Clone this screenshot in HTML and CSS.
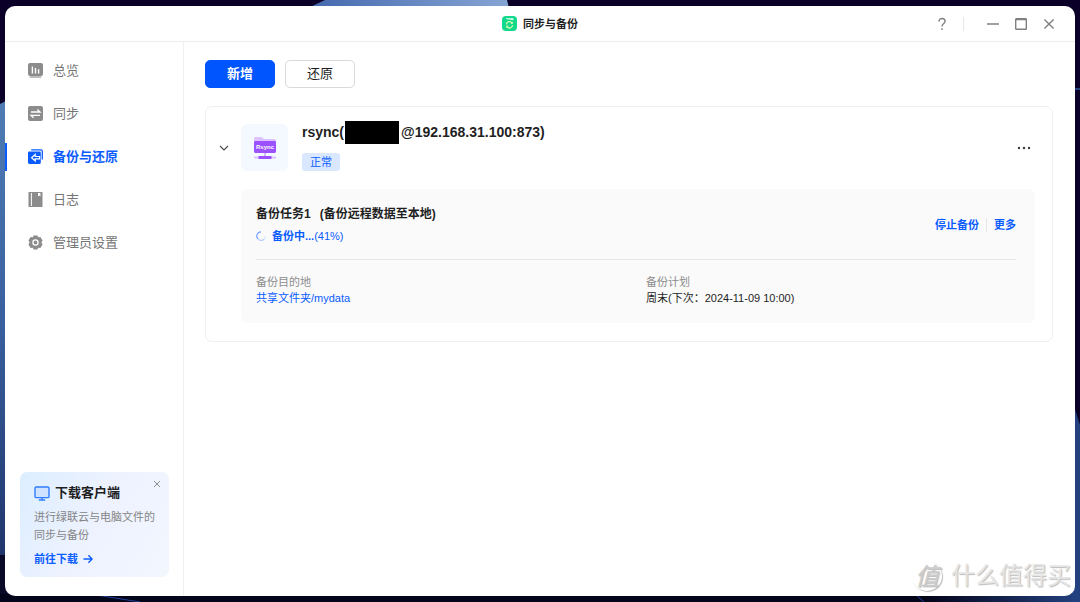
FILE: index.html
```html
<!DOCTYPE html>
<html lang="zh-CN">
<head>
<meta charset="utf-8">
<meta name="viewport" content="width=device-width, initial-scale=1">
<title>同步与备份</title>
<link rel="stylesheet" href="styles.css">
</head>
<body>
<svg class="wallpaper" viewBox="0 0 1080 602" preserveAspectRatio="none" aria-hidden="true">
  <defs>
    <linearGradient id="wl" x1="0" y1="0" x2="0" y2="1"><stop offset="0" stop-color="#4f7cb5"/><stop offset=".5" stop-color="#385f9e"/><stop offset="1" stop-color="#20356c"/></linearGradient>
    <linearGradient id="wr" x1="0" y1="0" x2="1" y2="0"><stop offset="0" stop-color="#04051c"/><stop offset="1" stop-color="#24417f"/></linearGradient>
    <linearGradient id="wt" x1="0" y1="0" x2="1" y2="0"><stop offset="0" stop-color="#4468ae"/><stop offset="1" stop-color="#86a5d4"/></linearGradient>
  </defs>
  <rect width="1080" height="602" fill="#0a0028"/>
  <path d="M0 104L8 100V555H0Z" fill="url(#wl)"/>
  <path d="M0 555H8V602H0Z" fill="#080a28"/>
  <path d="M325 0H507L509 8H308Z" fill="url(#wt)"/>
  <rect y="594" width="1080" height="8" fill="#03051a"/>
  <path d="M90 594L140 602M915 594L924 602" stroke="#22409a"/>
  <path d="M930 594H1080V602H930Z" fill="url(#wr)"/>
  <path d="M1072 400L1080 425V602H1072Z" fill="#24417f"/>
  <path d="M1072 88H1080V90H1072Z" fill="#24417f"/>
</svg>

<div class="window">
  <header class="titlebar">
    <h1 class="app-title">
      <svg class="app-icon" viewBox="0 0 15 15" aria-hidden="true">
        <rect width="15" height="15" rx="4" fill="#12d98c"/>
        <path d="M4 2.2H11.4V4.2L4 3Z" fill="#e6fff2"/>
        <path d="M4.4 8.4A3.1 3.1 0 0 1 10 6.9M10.6 9.2A3.1 3.1 0 0 1 5 10.7" fill="none" stroke="#d9f7a8" stroke-width="1.3"/>
        <path d="M10.8 5.4V8H8.4ZM4.2 12.2V9.6H6.6Z" fill="#d9f7a8"/>
      </svg>
      同步与备份
    </h1>
    <div class="controls">
      <button class="control" type="button" aria-label="帮助"><svg viewBox="0 0 14 14"><path d="M3.9 4.4C3.9 .5 10.1 .5 10.1 4.4C10.1 6.5 7 6.7 7 9.6M7 11.3V12.9"/></svg></button>
      <span class="control-divider"></span>
      <button class="control" type="button" aria-label="最小化"><svg viewBox="0 0 14 14"><path d="M1 7H13"/></svg></button>
      <button class="control" type="button" aria-label="最大化"><svg viewBox="0 0 14 14"><rect x="1.7" y="1.7" width="10.6" height="10.6" rx=".6"/><path d="M1.7 2.6H12.3"/></svg></button>
      <button class="control" type="button" aria-label="关闭"><svg viewBox="0 0 14 14"><path d="M2.4 2.4L11.6 11.6M11.6 2.4L2.4 11.6"/></svg></button>
    </div>
  </header>

  <div class="body">
    <aside class="sidebar">
      <nav class="nav">
        <a class="nav-item" href="#overview">
          <svg class="nav-icon" viewBox="0 0 15 15"><rect width="15" height="13" rx="2" fill="#8c8c8c"/><rect x="1.5" y="13" width="12" height="2" rx="1" fill="#bdbdbd"/><path d="M4.4 3.4V10.6M7.5 5V10.6M10.6 6.2V10.6" stroke="#fff" stroke-width="1.4"/></svg>
          总览
        </a>
        <a class="nav-item" href="#sync">
          <svg class="nav-icon" viewBox="0 0 15 15"><rect width="15" height="15" rx="2" fill="#8c8c8c"/><path d="M3 6H12L9.4 3.6M12 9.3H3L5.6 11.7" fill="none" stroke="#fff" stroke-width="1.3"/></svg>
          同步
        </a>
        <a class="nav-item nav-item-active" href="#backup" aria-current="page">
          <svg class="nav-icon" viewBox="0 0 15 15"><path d="M3.2 .9H13Q14.3 .9 14.3 2.2V10.5" fill="none" stroke="#0a5cff" stroke-width="1.3"/><rect x="0" y="2.6" width="12.8" height="12.4" rx="1.4" fill="#0a5cff"/><path d="M7.2 5.4L3.6 8.7L7.2 12V9.9H11.6V7.5H7.2Z" fill="none" stroke="#fff" stroke-width="1.2"/></svg>
          备份与还原
        </a>
        <a class="nav-item" href="#log">
          <svg class="nav-icon" viewBox="0 0 15 15"><rect x=".5" width="14" height="15" rx=".6" fill="#8c8c8c"/><path d="M3.4 1V14" stroke="#fff" stroke-width="1"/><path d="M10 1H12.4V4.4L11.2 3.5L10 4.4Z" fill="#fff"/></svg>
          日志
        </a>
        <a class="nav-item" href="#admin">
          <svg class="nav-icon" viewBox="0 0 15 15"><path d="M5.6 .4H9.4L10.2 2.3L12.4 2L14.6 5.4L13.4 7.5L14.6 9.6L12.4 13L10.2 12.7L9.4 14.6H5.6L4.8 12.7L2.6 13L.4 9.6L1.6 7.5L.4 5.4L2.6 2L4.8 2.3Z" fill="#8c8c8c"/><circle cx="7.5" cy="7.5" r="2.6" fill="#8c8c8c" stroke="#fff" stroke-width="1.3"/></svg>
          管理员设置
        </a>
      </nav>

      <section class="promo">
        <button class="promo-close" type="button" aria-label="关闭提示"><svg viewBox="0 0 8 8"><path d="M1 1L7 7M7 1L1 7"/></svg></button>
        <h2 class="promo-title">
          <svg class="promo-icon" viewBox="0 0 16 15" aria-hidden="true"><rect x="1" y="1" width="14" height="10.6" rx="1.2" fill="#cfe2ff" stroke="#2f7dff" stroke-width="1.4"/><path d="M8 12V14M4.8 14H11.2" stroke="#2f7dff" stroke-width="1.4"/></svg>
          下载客户端
        </h2>
        <p class="promo-text">进行绿联云与电脑文件的同步与备份</p>
        <a class="promo-link" href="#download">前往下载 <svg class="arrow" viewBox="0 0 10 10" aria-hidden="true"><path d="M.5 5H9M5.4 1.3L9.1 5L5.4 8.7"/></svg></a>
      </section>
    </aside>

    <main class="main">
      <div class="toolbar">
        <button class="button button-primary" type="button">新增</button>
        <button class="button" type="button">还原</button>
      </div>

      <section class="card">
        <div class="card-head">
          <button class="chevron" type="button" aria-label="收起" aria-expanded="true"><svg viewBox="0 0 10 10"><path d="M1 3L5 7L9 3"/></svg></button>
          <div class="service">
            <svg class="service-icon" viewBox="0 0 24 24" aria-hidden="true">
              <path d="M1 5V2.6Q1 1 2.6 1H8.6L11 3H21.4Q23 3 23 4.6V7H1Z" fill="#dcc3ff"/>
              <rect x="1" y="5" width="22" height="12" rx="1.4" fill="#9b51ff"/>
              <path d="M12 17V20" stroke="#c79cff" stroke-width="1.4"/>
              <path d="M1 21.4H23" stroke="#dcc3ff" stroke-width="2"/>
              <path d="M5.5 21.4H18.5" stroke="#9b51ff" stroke-width="3"/>
              <text x="12" y="13" text-anchor="middle" class="service-label">Rsync</text>
            </svg>
          </div>
          <div class="card-info">
            <h2 class="card-title">rsync(<span class="redacted"></span>@192.168.31.100:873)</h2>
            <span class="tag">正常</span>
          </div>
          <button class="more" type="button" aria-label="更多操作"><svg viewBox="0 0 14 4"><circle cx="2" cy="2" r="1.2"/><circle cx="7" cy="2" r="1.2"/><circle cx="12" cy="2" r="1.2"/></svg></button>
        </div>

        <article class="task">
          <div class="task-head">
            <div>
              <h3 class="task-title"><span>备份任务1</span><span>(备份远程数据至本地)</span></h3>
              <p class="status">
                <svg class="spinner" viewBox="0 0 10 10" aria-hidden="true"><path d="M8.4 8A4.2 4.2 0 0 0 9.2 5" stroke="#dce8ff"/><path d="M5 .8A4.2 4.2 0 0 0 2 7.9" stroke="#6fa0ff"/><path d="M2 7.9A4.2 4.2 0 0 0 8.4 8" stroke="#b4ceff"/></svg>
                <span><strong>备份中...</strong>(41%)</span>
              </p>
            </div>
            <div class="actions">
              <button class="text-button" type="button">停止备份</button>
              <span class="action-divider"></span>
              <button class="text-button" type="button">更多</button>
            </div>
          </div>
          <dl class="details">
            <div>
              <dt>备份目的地</dt>
              <dd><a class="path" href="#mydata">共享文件夹/mydata</a></dd>
            </div>
            <div>
              <dt>备份计划</dt>
              <dd>周末(下次：2024-11-09 10:00)</dd>
            </div>
          </dl>
        </article>
      </section>
    </main>
  </div>

  <div class="watermark">
    <span class="watermark-mark">值</span>
    <span>什么值得买</span>
  </div>
</div>
</body>
</html>
```

FILE: styles.css
```css
* {
  box-sizing: border-box;
}

body {
  margin: 0;
  min-height: 100vh;
  padding: 6px 5px;
  display: flex;
  background: #0a0028;
  color: #1f1f1f;
  font-family: "Liberation Sans", "Noto Sans CJK SC", sans-serif;
  font-size: 11px;
  line-height: 16px;
}

h1, h2, h3, p, dl, dd {
  margin: 0;
}

a {
  color: inherit;
  text-decoration: none;
}

button {
  padding: 0;
  border: 0;
  background: none;
  color: inherit;
  font: inherit;
  cursor: pointer;
}

svg {
  display: block;
}

.wallpaper {
  position: absolute;
  inset: 0;
  width: 100%;
  height: 100%;
}

.window {
  position: relative;
  flex: 1;
  display: flex;
  flex-direction: column;
  border-radius: 10px;
  background: #fff;
  overflow: hidden;
}

.titlebar {
  display: grid;
  grid-template-columns: 1fr auto 1fr;
  align-items: center;
  height: 36px;
  border-bottom: 1px solid #ececec;
}

.app-title {
  grid-column: 2;
  display: flex;
  align-items: center;
  gap: 6px;
  font-size: 11px;
}

.app-icon {
  width: 15px;
  height: 15px;
}

.controls {
  display: flex;
  justify-content: flex-end;
  align-items: center;
  gap: 14px;
  padding-right: 19px;
}

.control {
  width: 14px;
  height: 14px;
}

.control svg {
  fill: none;
  stroke: #808080;
  stroke-width: 1.4;
}

.control-divider {
  width: 1px;
  height: 14px;
  margin-right: 8px;
  background: #e8e8e8;
}

.body {
  flex: 1;
  display: flex;
}

.sidebar {
  flex: none;
  display: flex;
  flex-direction: column;
  justify-content: space-between;
  width: 179px;
  padding: 7px 0 19px;
  border-right: 1px solid #f0f0f0;
}

.nav-item {
  display: flex;
  align-items: center;
  gap: 10px;
  height: 43px;
  padding-left: 23px;
  color: #757575;
  font-size: 13px;
}

.nav-icon {
  width: 15px;
  height: 15px;
}

.nav-item-active {
  background: linear-gradient(#0a5cff, #0a5cff) 0 50% / 2px 28px no-repeat;
  color: #0a5cff;
  font-weight: 700;
}

.promo {
  position: relative;
  margin: 0 14px 0 15px;
  padding: 12px 14px 10px;
  border-radius: 7px;
  background: linear-gradient(120deg, #dceeff 0%, #eef2ff 50%, #f2f7ff 100%);
}

.promo-close {
  position: absolute;
  top: 8px;
  right: 8px;
  width: 8px;
  height: 8px;
}

.promo-close svg {
  fill: none;
  stroke: #8c8c8c;
}

.promo-title {
  display: flex;
  align-items: center;
  gap: 5px;
  font-size: 13px;
  line-height: 18px;
}

.promo-icon {
  width: 16px;
  height: 15px;
}

.promo-text {
  margin: 6px 0 7px;
  color: #858585;
  line-height: 18px;
}

.promo-link {
  display: flex;
  align-items: center;
  gap: 5px;
  color: #0a5cff;
  font-weight: 700;
}

.arrow {
  width: 10px;
  height: 10px;
  fill: none;
  stroke: #0a5cff;
  stroke-width: 1.4;
}

.main {
  flex: 1;
  padding: 18px 22px 18px 21px;
}

.toolbar {
  display: flex;
  gap: 10px;
}

.button {
  width: 70px;
  height: 28px;
  border: 1px solid #d9d9d9;
  border-radius: 5px;
  font-size: 13px;
}

.button-primary {
  border-color: #0055ff;
  background: #0055ff;
  color: #fff;
  font-weight: 700;
}

.card {
  margin-top: 18px;
  padding: 15px 17px 18px 13px;
  border: 1px solid #efefef;
  border-radius: 7px;
}

.card-head {
  display: flex;
  align-items: center;
}

.chevron {
  width: 10px;
  height: 10px;
  margin-right: 12px;
}

.chevron svg {
  fill: none;
  stroke: #4d4d4d;
  stroke-width: 1.2;
}

.service {
  display: grid;
  place-items: center;
  width: 47px;
  height: 47px;
  border-radius: 6px;
  background: #f4f8ff;
}

.service-icon {
  width: 24px;
  height: 24px;
}

.service-label {
  fill: #fff;
  font-size: 6px;
  font-weight: 700;
}

.card-info {
  flex: 1;
  display: flex;
  flex-direction: column;
  align-items: flex-start;
  gap: 11px;
  margin: 0 0 2px 14px;
}

.card-title {
  display: flex;
  align-items: center;
  height: 20px;
  font-size: 14px;
}

.redacted {
  width: 54px;
  height: 23px;
  margin: 0 2px 0 1px;
  background: #000;
}

.tag {
  padding: 1px 8px;
  border-radius: 3px;
  background: #d9e7ff;
  color: #0a5cff;
}

.more {
  width: 14px;
  height: 4px;
  margin-right: 4px;
}

.more svg {
  fill: #3d3d3d;
}

.task {
  margin: 16px 0 0 22px;
  padding: 16px 19px 16px 15px;
  border-radius: 7px;
  background: #fafafa;
}

.task-head {
  display: flex;
  align-items: center;
  justify-content: space-between;
  padding-bottom: 15px;
  border-bottom: 1px solid #e6e6e6;
}

.task-title {
  display: flex;
  gap: 9px;
  font-size: 12px;
  line-height: 18px;
}

.status {
  display: flex;
  align-items: center;
  gap: 6px;
  margin-top: 5px;
  color: #0a5cff;
}

.spinner {
  width: 10px;
  height: 10px;
  fill: none;
  stroke-width: 1.2;
}

.actions {
  display: flex;
  align-items: center;
  gap: 7px;
}

.text-button {
  color: #0a5cff;
  font-weight: 700;
}

.action-divider {
  width: 1px;
  height: 14px;
  background: #e6e6e6;
}

.details {
  display: grid;
  grid-template-columns: 1fr 1fr;
  gap: 20px;
  padding: 14px 0 1px;
}

.details dt {
  color: #8c8c8c;
}

.path {
  color: #0a5cff;
}

.watermark {
  position: absolute;
  right: 4px;
  bottom: 4px;
  display: flex;
  align-items: center;
  gap: 9px;
  color: #e6e6e6;
  font-size: 24px;
  line-height: 32px;
  text-shadow: 1px 1px 1px #bbb;
  pointer-events: none;
}

.watermark-mark {
  display: grid;
  place-items: center;
  width: 30px;
  height: 30px;
  border-radius: 50%;
  box-shadow: 1px 1px 1px #bbb;
  color: #ccc;
  font-style: italic;
}
```
